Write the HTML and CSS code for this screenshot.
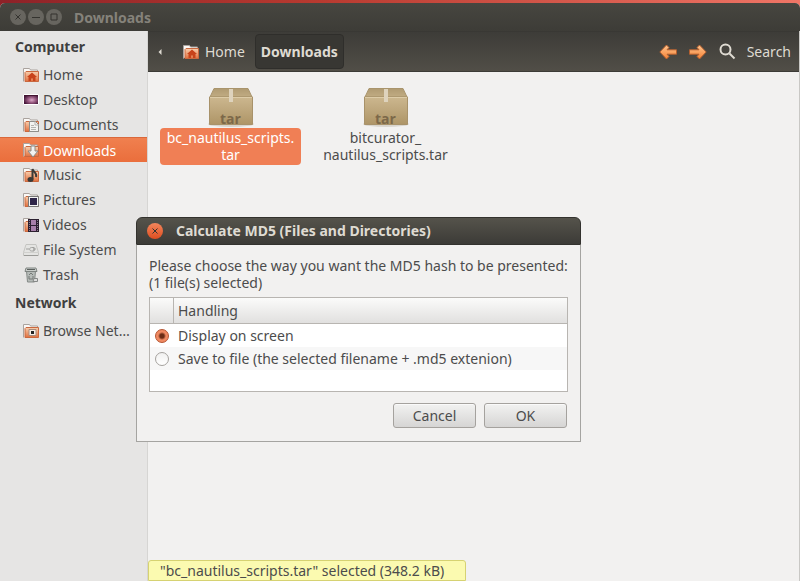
FILE: index.html
```html
<!DOCTYPE html>
<html lang="en">
<head>
<meta charset="utf-8">
<title>Downloads</title>
<link rel="stylesheet" href="styles.css">
</head>
<body>
<svg class="defs" width="0" height="0" aria-hidden="true">
  <defs>
    <linearGradient id="orange" x1="0" y1="0" x2="0" y2="1"><stop offset="0" stop-color="#f8cfae"/><stop offset="1" stop-color="#e0703f"/></linearGradient>
    <linearGradient id="arrow" x1="0" y1="0" x2="0" y2="1"><stop offset="0" stop-color="#ffc690"/><stop offset="1" stop-color="#f58134"/></linearGradient>
    <linearGradient id="tarface" x1="0" y1="0" x2="0" y2="1"><stop offset="0" stop-color="#ccb78f"/><stop offset="1" stop-color="#ae9567"/></linearGradient>
    <linearGradient id="tartop" x1="0" y1="0" x2="0" y2="1"><stop offset="0" stop-color="#b09b72"/><stop offset="1" stop-color="#c1ac83"/></linearGradient>
    <radialGradient id="wall" cx=".55" cy=".55" r=".55"><stop offset="0" stop-color="#dcaac8"/><stop offset=".5" stop-color="#96587f"/><stop offset="1" stop-color="#45183a"/></radialGradient>
    <symbol id="folder" viewBox="0 0 16 16">
      <path d="M.5 14.500V1.500h6l1 1.500h7v2" fill="#faf8f6" stroke="#aaa39e"/>
      <path d="M2 14.500V5.500l1-1h12.500v10z" fill="url(#orange)" stroke="#c9683f"/>
    </symbol>
    <symbol id="home" viewBox="0 0 16 16">
      <use href="#folder"/>
      <path d="M9 5.500l5 4.500h-1.500v4h-2.500v-2.500H8V14H5.500v-4H4z" fill="#c8431b"/>
    </symbol>
    <symbol id="tar" viewBox="0 0 46 42">
      <ellipse cx="23" cy="38" rx="23" ry="3" fill="#d9d5ce"/>
      <path d="M2 11L6 2.500h34l4 8.500z" fill="url(#tartop)" stroke="#a9946c"/>
      <path d="M1.500 11h43v27.500h-43z" fill="url(#tarface)" stroke="#a8926a"/>
      <path d="M2 11.500h42" stroke="#ddcca8"/>
      <path d="M21 3h4v13h-4z" fill="#ded3bd"/>
    </symbol>
  </defs>
</svg>

<div class="screen">
  <div class="window">
    <header class="titlebar">
      <div class="controls">
        <button type="button" aria-label="Close"><svg viewBox="0 0 16 16"><path d="M5.500 5.500l5 5m0-5l-5 5"/></svg></button>
        <button type="button" aria-label="Minimize"><svg viewBox="0 0 16 16"><path d="M4 8.500h8"/></svg></button>
        <button type="button" aria-label="Maximize"><svg viewBox="0 0 16 16"><path d="M5 5h6v6H5z"/></svg></button>
      </div>
      <h1>Downloads</h1>
    </header>
    <div class="body">
      <nav class="sidebar">
        <h2>Computer</h2>
        <a href="#home"><svg viewBox="0 0 16 16"><use href="#home"/></svg><span>Home</span></a>
        <a href="#desktop"><svg viewBox="0 0 16 16"><path d="M.5 2.500h15v10H.5z" fill="url(#wall)" stroke="#fff"/><path d="M1 3h14v1H1z" fill="#42142f"/></svg><span>Desktop</span></a>
        <a href="#documents"><svg viewBox="0 0 16 16"><use href="#folder"/><path d="M6.500 4.500h6l3 3v7h-9z" fill="#f3f3f1" stroke="#8f8f8b"/><path d="M12 4.500V8h3.500M8 8.500h3M8 10.500h5M8 12.500h5" fill="none" stroke="#b4b4b0"/></svg><span>Documents</span></a>
        <a href="#downloads" class="current" aria-current="page"><svg viewBox="0 0 16 16"><use href="#folder"/><path d="M8 4h4v5h3l-5 6-5-6h3z" fill="#f2f2f0" stroke="#8b8b88"/></svg><span>Downloads</span></a>
        <a href="#music"><svg viewBox="0 0 16 16"><use href="#folder"/><path d="M9.500 12V2c1 3.500 5 4 3.500 8" fill="none" stroke="#3a3a38" stroke-width="2"/><ellipse cx="7.500" cy="12.500" rx="3" ry="2.500" fill="#3a3a38"/></svg><span>Music</span></a>
        <a href="#pictures"><svg viewBox="0 0 16 16"><use href="#folder"/><path d="M5.500 4.500h10v10h-10z" fill="#f5f5f3" stroke="#777"/><path d="M7 6h7v7H7z" fill="#2e2548"/></svg><span>Pictures</span></a>
        <a href="#videos"><svg viewBox="0 0 16 16"><use href="#folder"/><path d="M5 2h11v13H5z" fill="#2c2030"/><path d="M8 3h5v5H8zm0 6h5v5H8z" fill="#a87faa"/><path d="M6.500 3v12m8-12v12" stroke="#8d7a8f" stroke-dasharray="1 1"/></svg><span>Videos</span></a>
        <a href="#filesystem"><svg viewBox="0 0 16 16"><path d="M3 2.500h10l2.500 8v3H.5v-3z" fill="#e4e4e2" stroke="#c4c4c1"/><path d="M.5 10.500h15" stroke="#d0d0cd"/><path d="M1 13.500h14" stroke="#9b9b98"/><path d="M3 7h3m5-1.500H8.500C6 5.500 6 9 8.500 9H11zm0 0v3.500M11 7h2" fill="none" stroke="#a0a09e"/></svg><span>File System</span></a>
        <a href="#trash"><svg viewBox="0 0 16 16"><path d="M3.500 4h9l-1 11h-7z" fill="#b6bbb8" stroke="#858a87"/><path d="M3 1h10l1 3.500H2z" fill="#c9cdca" stroke="#7f8481"/><path d="M4 2.500h8" stroke="#5c615e"/><path d="M6 8l2-2 2 2m-4 1v3h4V9" fill="none" stroke="#747976"/><path d="M11 11.500h3.500v3H10z" fill="#ddd" stroke="#858886"/></svg><span>Trash</span></a>
        <h2>Network</h2>
        <a href="#network"><svg viewBox="0 0 16 16"><use href="#folder"/><path d="M6 6.500h7v6H6z" fill="#f5eee8" stroke="#a88b7b"/><path d="M8 8h3v3H8z" fill="#222"/></svg><span>Browse Net…</span></a>
      </nav>
      <main>
        <div class="toolbar">
          <button type="button" class="back" aria-label="Scroll path left"><svg viewBox="0 0 4 6"><path d="M3.500 0v6L.5 3z"/></svg></button>
          <button type="button" class="crumb"><svg viewBox="0 0 16 16"><use href="#home"/></svg>Home</button>
          <button type="button" class="crumb active">Downloads</button>
          <div class="tools">
            <button type="button" aria-label="Back"><svg class="arrow" viewBox="0 0 18 16"><path d="M7.500 1L.8 8l6.700 7 2.500-2.500L8 10.200h9.500V5.800H8l2-2.300z"/></svg></button>
            <button type="button" aria-label="Forward"><svg class="arrow" viewBox="0 0 18 16"><path d="M10.500 1l6.700 7-6.700 7L8 12.500l2-2.300H.5V5.800H10L8 3.500z"/></svg></button>
            <button type="button" class="search"><svg viewBox="0 0 17 17"><circle cx="6.500" cy="6.500" r="5"/><path d="M10.500 10.500l5 5"/></svg>Search</button>
          </div>
        </div>
        <div class="files">
          <a class="file selected" href="#bc">
            <svg viewBox="0 0 46 42"><use href="#tar"/></svg><b>tar</b>
            <span>bc_nautilus_scripts.<br>tar</span>
          </a>
          <a class="file" href="#bitcurator">
            <svg viewBox="0 0 46 42"><use href="#tar"/></svg><b>tar</b>
            <span>bitcurator_<br>nautilus_scripts.tar</span>
          </a>
        </div>
        <p class="status">"bc_nautilus_scripts.tar" selected (348.2 kB)</p>
      </main>
    </div>
  </div>

  <form class="dialog" role="dialog" aria-labelledby="dialog-title">
    <header>
      <button type="button" aria-label="Close dialog"><svg viewBox="0 0 16 16"><path d="M5.500 5.500l5 5m0-5l-5 5"/></svg></button>
      <h2 id="dialog-title">Calculate MD5 (Files and Directories)</h2>
    </header>
    <div class="content">
      <p>Please choose the way you want the MD5 hash to be presented:<br>(1 file(s) selected)</p>
      <div class="list">
        <table>
          <thead><tr><th></th><th>Handling</th></tr></thead>
          <tbody>
            <tr><td><input type="radio" name="handling" id="display" checked></td><td><label for="display">Display on screen</label></td></tr>
            <tr><td><input type="radio" name="handling" id="save"></td><td><label for="save">Save to file (the selected filename + .md5 extenion)</label></td></tr>
          </tbody>
        </table>
      </div>
      <div class="actions"><button type="button">Cancel</button><button type="button">OK</button></div>
    </div>
  </form>
</div>
</body>
</html>
```
FILE: styles.css
```css
* { box-sizing: border-box; }
body {
  margin: 0;
  font: 14px/17px "Noto Sans", "Open Sans", sans-serif;
  color: #4c4c4c;
}
h1, h2, p { margin: 0; font-size: inherit; }
a { color: inherit; text-decoration: none; }
button { font: inherit; color: inherit; border: 0; background: none; padding: 0; }
svg { display: block; flex: none; }
.defs { position: absolute; }

.screen {
  position: relative;
  min-height: 100vh;
  display: flex;
  padding-top: 3px;
  background: linear-gradient(90deg, #8e2228, #b83a30 40%, #ef7566);
}
.window {
  flex: 1;
  display: flex;
  flex-direction: column;
  min-width: 0;
  border-radius: 5px 5px 0 0;
  overflow: hidden;
  background: #f2f1f0;
}
.titlebar {
  display: flex;
  align-items: center;
  gap: 12px;
  height: 28px;
  padding-left: 10px;
  background: linear-gradient(#474640, #3d3c37);
  color: #85827a;
}
.controls { display: flex; gap: 2px; }
.controls button {
  width: 16px;
  height: 16px;
  border-radius: 50%;
  background: #67655f;
}
.controls svg, .dialog header svg {
  width: 16px;
  height: 16px;
  fill: none;
  stroke: #34332f;
  stroke-width: 1;
}
.body { flex: 1; display: flex; }

.sidebar {
  width: 148px;
  flex: none;
  background: #e6e5e4;
  border-right: 1px solid #d6d5d3;
}
.sidebar h2 {
  height: 31px;
  padding: 7px 15px;
  color: #3f3f3f;
}
.sidebar a {
  display: flex;
  align-items: center;
  gap: 4px;
  height: 25px;
  padding-left: 23px;
  white-space: nowrap;
}
.sidebar svg, .crumb svg { width: 16px; height: 16px; }
.sidebar .current {
  background: linear-gradient(#f0804f, #ea6e3c);
  border-top: 1px solid #d9683b;
  color: #fff;
}

main { flex: 1; display: flex; flex-direction: column; min-width: 0; border-right: 1px solid #c9c8c5; }
.toolbar {
  display: flex;
  align-items: center;
  height: 41px;
  padding: 0 8px 0 10px;
  background: linear-gradient(#3d3c38, #514e47);
  border-top: 1px solid #393834;
  border-bottom: 1px solid #3c3b37;
  color: #dfdbd2;
}
.back { margin-right: 21px; }
.back svg { width: 4px; height: 6px; fill: #dfdbd2; }
.crumb { display: flex; align-items: center; gap: 6px; height: 35px; margin-right: 10px; }
.active {
  padding: 0 5px;
  border: 1px solid #2f2e2b;
  border-radius: 4px;
  background: #383733;
  font-weight: bold;
}
.tools { display: flex; align-items: center; gap: 12px; margin-left: auto; }
.arrow { width: 18px; height: 16px; fill: url(#arrow); stroke: #b6602f; }
.search { display: flex; align-items: center; gap: 11px; }
.search svg { width: 17px; height: 17px; fill: none; stroke: #dfdbd2; stroke-width: 2; }

.files { flex: 1; display: flex; align-items: flex-start; gap: 14px; padding: 14px 12px; }
.file {
  display: flex;
  flex-direction: column;
  align-items: center;
  width: 141px;
  text-align: center;
}
.file svg { width: 46px; height: 42px; }
.file b {
  height: 17px;
  margin-top: -17px;
  font: bold 14px/16px "Open Sans", sans-serif;
  color: #7c6849;
}
.file span { width: 100%; padding: 1px 0 2px; border-radius: 4px; white-space: nowrap; }
.selected span { background: #f07f55; color: #fff; }
.status {
  align-self: flex-start;
  min-width: 318px;
  height: 21px;
  padding: 1px 11px;
  border: 1px solid #d6d272;
  border-radius: 3px 3px 0 0;
  background: #fbfab0;
}

.dialog {
  position: absolute;
  left: 136px;
  top: 217px;
  width: 445px;
  border-radius: 6px 6px 0 0;
  background: #f2f1f0;
}
.dialog header {
  display: flex;
  align-items: center;
  gap: 13px;
  height: 28px;
  padding: 0 10px 1px;
  border: 1px solid #33322e;
  border-radius: 6px 6px 0 0;
  background: linear-gradient(#55534b, #3c3b37);
  color: #dfdbd2;
}
.dialog header button {
  width: 16px;
  height: 16px;
  border-radius: 50%;
  background: linear-gradient(#f4865c, #dd4e20);
}
.content { padding: 12px 12px 13px; border: 1px solid #a5a4a1; border-top: 0; }
.content p { white-space: nowrap; }
.list { height: 95px; margin: 6px 0 11px; border: 1px solid #b8b5b1; background: #fff; }
table { width: 100%; border-spacing: 0; }
th {
  height: 26px;
  padding: 0 4px;
  background: linear-gradient(#fbfbfa, #e1e0df);
  border-bottom: 1px solid #b8b5b1;
  font-weight: normal;
  text-align: left;
}
th:first-child { width: 24px; border-right: 1px solid #b8b5b1; }
td { height: 23px; padding: 0 4px; }
td:first-child { padding: 0 5px; }
tbody tr:nth-child(2) { background: #f7f7f7; }
input {
  display: block;
  appearance: none;
  width: 14px;
  height: 14px;
  margin: 0;
  border: 1px solid #a5a29e;
  border-radius: 50%;
  background: linear-gradient(#f1f1f0, #fff);
}
input:checked {
  border-color: #b5522f;
  background: radial-gradient(circle, #6b2c15 0 2px, #f08a62 4px);
}
.actions { display: flex; justify-content: flex-end; gap: 8px; padding-right: 1px; }
.actions button {
  width: 83px;
  height: 25px;
  border: 1px solid #a5a29e;
  border-radius: 3px;
  background: linear-gradient(#f2f2f1, #d6d5d4);
  box-shadow: inset 0 1px #fafafa;
}
```
